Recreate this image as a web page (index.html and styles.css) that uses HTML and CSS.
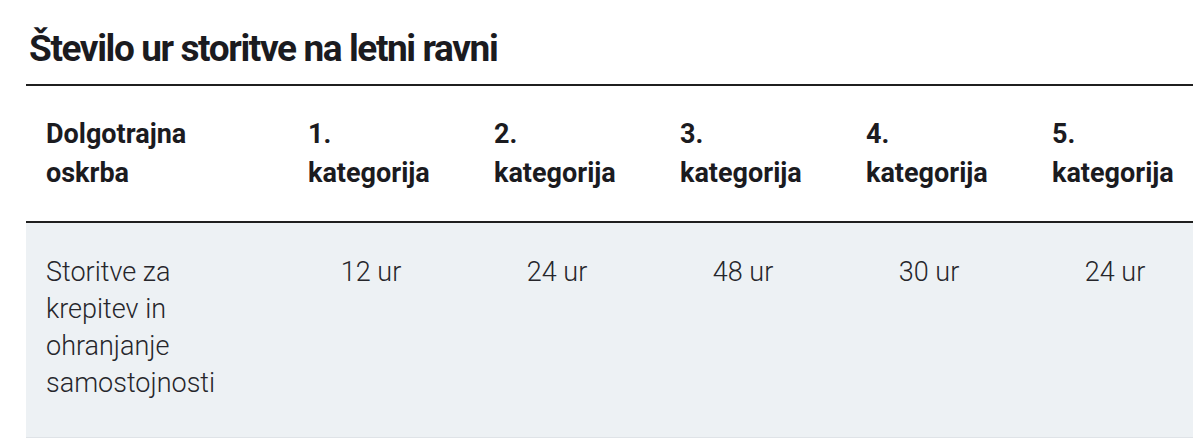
FILE: index.html
```html
<!DOCTYPE html>
<html lang="sl">
<head>
<meta charset="utf-8">
<title>Število ur storitve na letni ravni</title>
<link rel="stylesheet" href="styles.css">
</head>
<body>
<section class="wrap">
  <h2 class="title">Število ur storitve na letni ravni</h2>
  <div class="table-scroll">
    <table class="hours">
      <colgroup>
        <col class="c-first">
        <col class="c-cat"><col class="c-cat"><col class="c-cat"><col class="c-cat"><col class="c-cat">
      </colgroup>
      <thead>
        <tr>
          <th class="first">Dolgotrajna<br>oskrba</th>
          <th>1.<br>kategorija</th>
          <th>2.<br>kategorija</th>
          <th>3.<br>kategorija</th>
          <th>4.<br>kategorija</th>
          <th>5.<br>kategorija</th>
        </tr>
      </thead>
      <tbody>
        <tr>
          <td class="first">Storitve za<br>krepitev in<br>ohranjanje<br>samostojnosti</td>
          <td class="val">12 ur</td>
          <td class="val">24 ur</td>
          <td class="val">48 ur</td>
          <td class="val">30 ur</td>
          <td class="val">24 ur</td>
        </tr>
      </tbody>
    </table>
  </div>
</section>
</body>
</html>
```

FILE: styles.css
```css
html, body {
  margin: 0;
  padding: 0;
  background: #ffffff;
}

body {
  font-family: "Roboto", "Liberation Sans", sans-serif;
  color: #1b1b1f;
}

.wrap {
  margin-left: 26px;
  width: 1167px;
  padding-top: 25px;
}

.title {
  margin: 0;
  font-size: 37px;
  line-height: 48px;
  font-weight: 700;
  letter-spacing: -1.4px;
  padding: 0 0 11px 3px;
  border-bottom: 2px solid #1f1f1f;
}

.table-scroll {
  overflow: hidden;
}

.hours {
  border-collapse: collapse;
  table-layout: fixed;
  width: 1192px;
}

.c-first { width: 262px; }
.c-cat { width: 186px; }

.hours th,
.hours td {
  padding: 0 40px 0 20px;
  vertical-align: top;
  text-align: left;
  font-size: 27px;
}

.hours th {
  font-weight: 700;
  line-height: 39px;
  padding-top: 29px;
  padding-bottom: 28px;
  border-bottom: 2px solid #1f1f1f;
}

.hours tbody tr {
  background: #edf1f4;
  border-bottom: 1px solid #dfe3e7;
}

.hours td {
  font-weight: 300;
  color: #26262b;
  line-height: 37px;
  padding-top: 31px;
  padding-bottom: 35px;
}

.hours td.val {
  text-align: center;
}
```
